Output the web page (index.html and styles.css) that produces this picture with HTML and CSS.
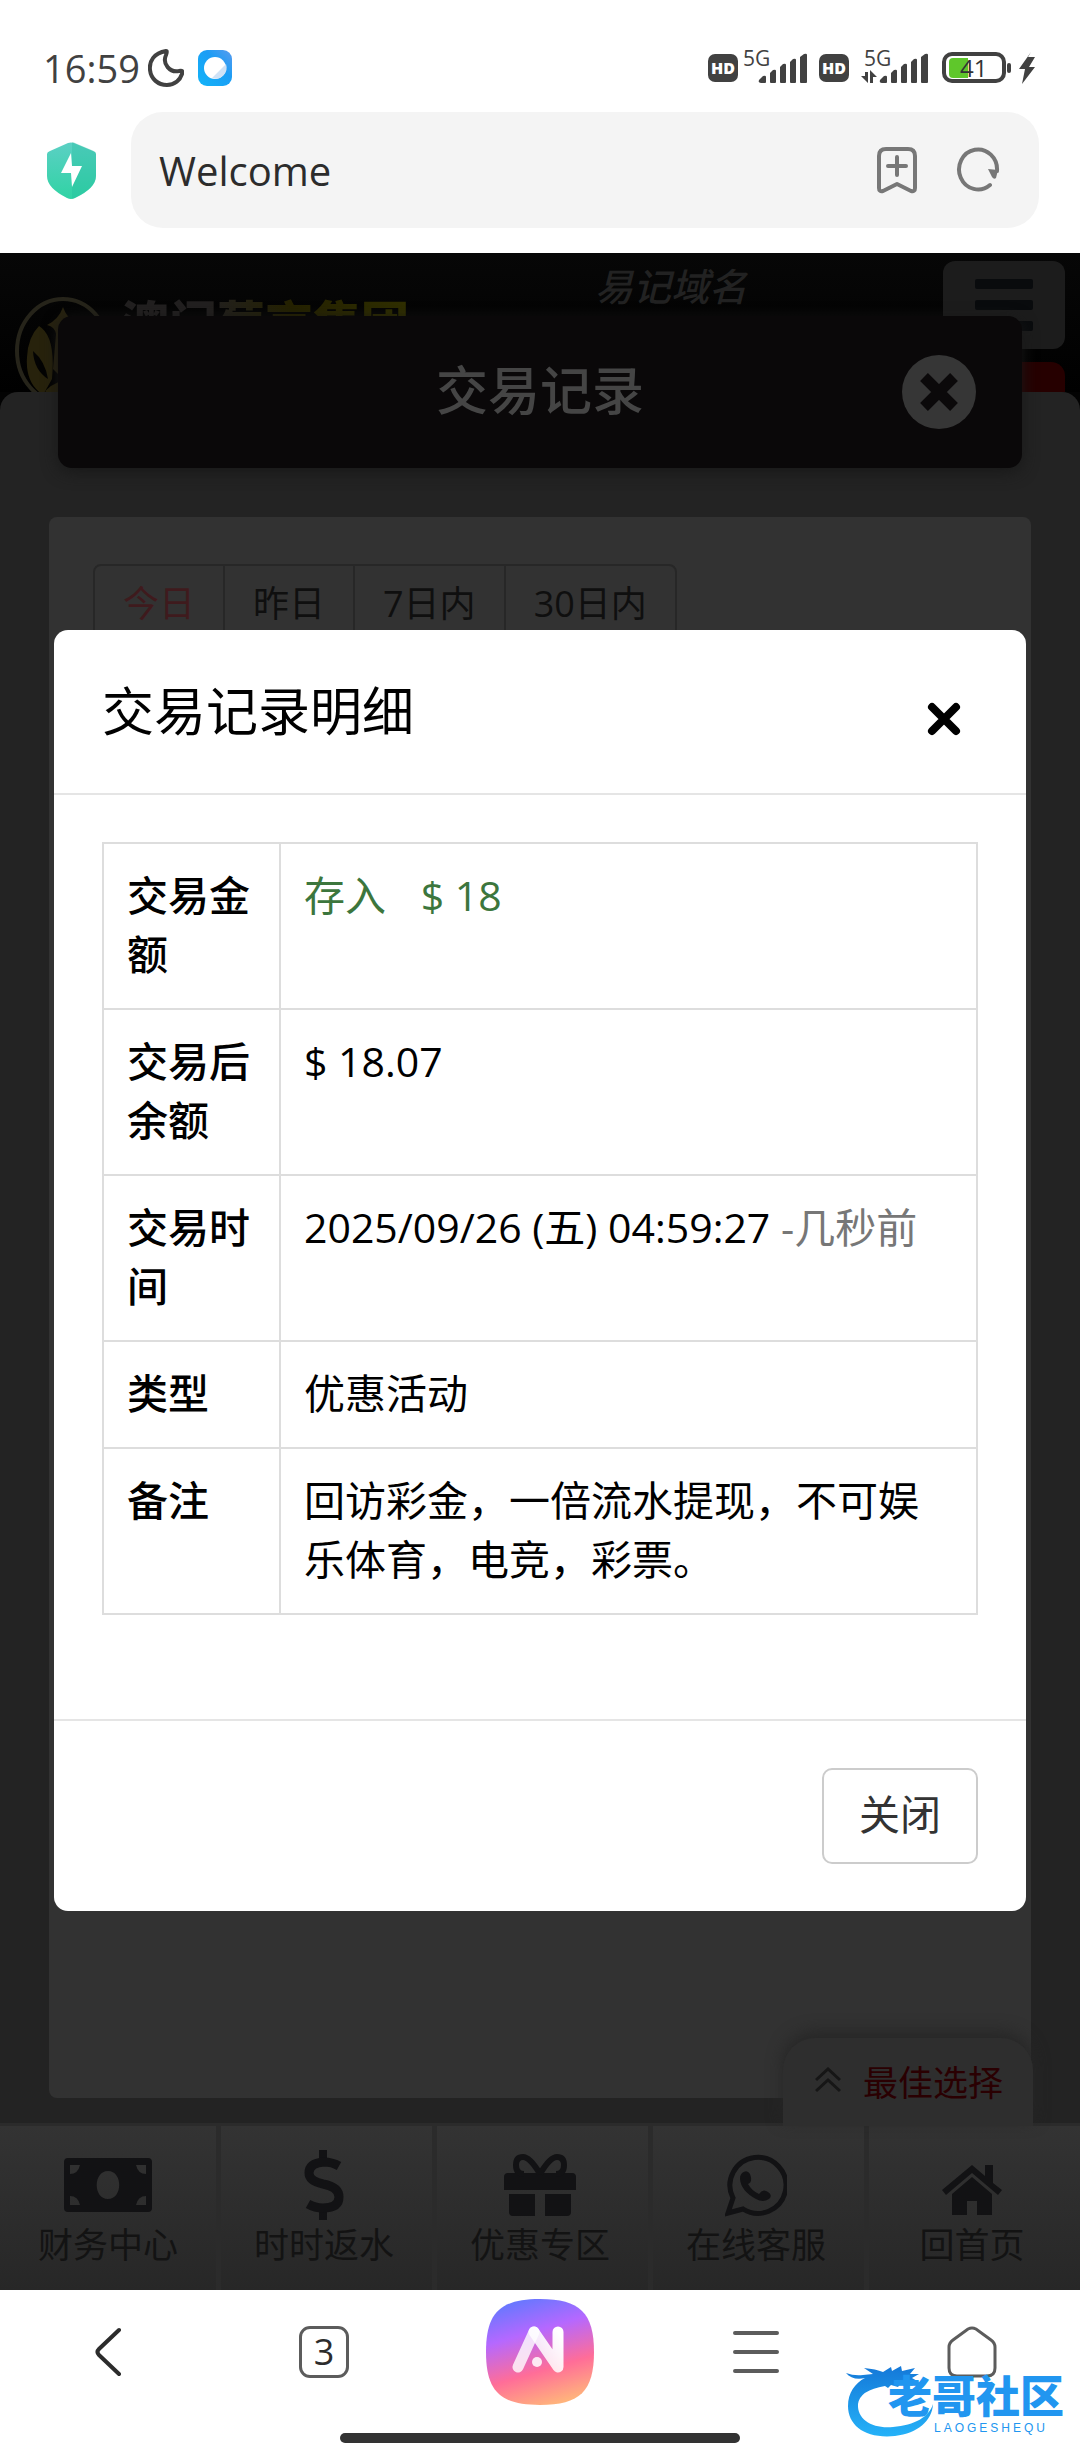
FILE: index.html
```html
<!DOCTYPE html>
<html lang="zh-CN">
<head>
    <meta charset="UTF-8">
    <meta name="viewport" content="width=device-width, initial-scale=1.0">
    <title>Welcome</title>
    <link rel="stylesheet" href="styles.css">
</head>
<body>
    <div class="status-bar">
        <span class="clock">16:59</span>
        <svg class="moon" width="36" height="38" viewBox="0 0 36 38"><path d="M18 2C6 4 1 12 2 21c1 9 8 15 17 15 8 0 13-5 15-11 1-3 0-4-3-3-9 2-17-7-13-16 1-3 1-4 0-4z" fill="none" stroke="#414141" stroke-width="4" stroke-linejoin="round"/></svg>
        <svg class="app-dot" width="34" height="36" viewBox="0 0 34 36">
            <defs><linearGradient id="dot" x1="0" y1="1" x2="1" y2="0"><stop offset="0" stop-color="#12b4f8"/><stop offset=".6" stop-color="#1b9df5"/><stop offset="1" stop-color="#5a9bee"/></linearGradient></defs>
            <rect width="34" height="36" rx="9" fill="url(#dot)"/>
            <circle cx="17" cy="18" r="11" fill="#fff"/>
            <path d="M28 14a11 11 0 0 1-14 14z" fill="#cfe2f6"/>
        </svg>
        <svg class="status-icons" width="330" height="58" viewBox="0 -10 330 58">
            <g fill="#414141">
                <rect x="2" y="5" width="30" height="28" rx="7"/>
                <rect x="113" y="5" width="30" height="28" rx="7"/>
                <g id="bars">
                    <path d="M53 31l4-4q3-1 3 1v5q0 1-1 1h-4q-3 0-2-3z"/>
                    <path d="M64 24l3-3q3-1 3 1v11q0 1-1 1h-4q-1 0-1-1z"/>
                    <path d="M74 18l3-3q3-1 3 1v17q0 1-1 1h-4q-1 0-1-1z"/>
                    <path d="M84 13l3-3q3-1 3 1v22q0 1-1 1h-4q-1 0-1-1z"/>
                    <path d="M94 8l4-3q3-1 3 1v27q0 1-1 1h-5q-1 0-1-1z"/>
                </g>
                <use href="#bars" x="121"/>
                <path d="M159 23h3v11l-7-7h4zM164 34h3v-6h4l-7-7z"/>
                <rect x="301" y="14" width="4" height="10" rx="2"/>
                <path d="M325 3l-12 17h6l-3 15 13-17h-6l6-10h-7z"/>
            </g>
            <rect x="238" y="5" width="60" height="27" rx="8" fill="none" stroke="#414141" stroke-width="4"/>
            <path d="M247 9h15v20h-15q-4 0-4-4v-12q0-4 4-4z" fill="#5fc72b"/>
            <g class="hd-label"><text x="5" y="25">HD</text><text x="116" y="25">HD</text></g>
            <g class="net-label"><text x="37" y="17">5G</text><text x="158" y="17">5G</text></g>
            <text class="battery-label" x="254" y="28">41</text>
        </svg>
    </div>

    <div class="address-row">
        <svg class="shield" width="49" height="57" viewBox="0 0 49 57">
            <defs><linearGradient id="sh" x1="0" y1="0" x2="0" y2="1"><stop offset="0" stop-color="#5bd0c4"/><stop offset="1" stop-color="#30d3a4"/></linearGradient></defs>
            <path d="M21 1q3-1 6 0l19 8q3 1 3 3v22q0 12-21 22-4 2-8 0Q0 46 0 34V12q0-2 3-3z" fill="url(#sh)"/>
            <path d="M25 0q2 0 3 1l19 8q2 1 2 3v22q0 12-21 22l-3 1z" fill="#22b99d" opacity=".3"/>
            <path d="M24 11L14 31h10l1 14 10-21H25z" fill="#fff"/>
        </svg>
        <div class="address-bar">
            <span class="page-name">Welcome</span>
            <button class="icon-button" aria-label="添加书签">
                <svg width="42" height="48" viewBox="0 0 42 48"><path d="M10 3h22q7 0 7 7v32q0 4-4 3l-14-7-14 7q-4 1-4-3V10q0-7 7-7zM21 11v18M12 20h18" fill="none" stroke="#777" stroke-width="4" stroke-linecap="round" stroke-linejoin="round"/></svg>
            </button>
            <button class="icon-button" aria-label="刷新">
                <svg width="44" height="46" viewBox="0 0 44 46"><path d="M34 38A19 20 0 1 1 41 24" fill="none" stroke="#777" stroke-width="4" stroke-linecap="round"/><path d="M32 22l10 1-2 8q-2 2-4-1z" fill="#777"/></svg>
            </button>
        </div>
    </div>

    <div class="site">
        <div class="site-header">
            <svg class="logo-mark" width="96" height="108" viewBox="0 0 96 108">
                <ellipse cx="48" cy="54" rx="46" ry="52" fill="none" stroke="#26241a" stroke-width="4"/>
                <path d="M48 10q4 12 16 18-10 3-12 10v30l-6 12-8-8 3-35q-1-7-9-9 12-6 16-18z" fill="#27220f"/>
                <path d="M24 29q17 10 13 53L28 98Q10 86 12 60q1-20 12-31z" fill="#27220c"/>
                <path d="M18 54q12 10 15 28-14-9-15-28z" fill="#030303"/>
                <path d="M30 94q12-12 30-12l24 4-24 16q-20 2-30-8z" fill="#27220c"/>
            </svg>
            <span class="brand">澳门葡京集团</span>
            <span class="domain">易记域名</span>
            <div class="header-side">
                <button class="menu-button" aria-label="菜单"><span></span><span></span><span></span></button>
                <div class="red-tab"></div>
            </div>
        </div>

        <div class="panel">
            <div class="card">
                <div class="range">
                    <button class="active">今日</button>
                    <button>昨日</button>
                    <button>7日内</button>
                    <button>30日内</button>
                </div>
            </div>
        </div>

        <div class="page-title">
            <h1>交易记录</h1>
            <button class="round-close" aria-label="关闭页面">
                <svg width="40" height="40" viewBox="0 0 40 40"><path d="M5 5l30 30M35 5L5 35" stroke="#0b090a" stroke-width="11"/></svg>
            </button>
        </div>

        <div class="site-nav">
            <button class="best-pick">
                <svg width="26" height="26" viewBox="0 0 26 26"><path d="M1 13L13 2l12 11M1 24l12-11 12 11" fill="none" stroke="#161616" stroke-width="3"/></svg>
                最佳选择
            </button>
            <a href="#">
                <svg width="88" height="54" viewBox="0 0 88 54"><path fill-rule="evenodd" d="M4 0h80q4 0 4 4v46q0 4-4 4H4q-4 0-4-4V4q0-4 4-4zM6 7v9q8 0 10-9zM82 7v9q-8 0-10-9zM6 47v-9q8 0 10 9zM82 47v-9q-8 0-10 9zM44 13c-15 0-15 28 0 28s15-28 0-28z"/></svg>
                <span>财务中心</span>
            </a>
            <a href="#">
                <svg width="42" height="70" viewBox="0 0 42 70"><path d="M16 0h8v9h-8zM16 60h8v10h-8z"/><path d="M36 16Q29 12 21 12 6 13 6 23q0 8 14 11 16 3 16 13 0 11-16 11-8 0-15-4" fill="none" stroke="#121214" stroke-width="9"/></svg>
                <span>时时返水</span>
            </a>
            <a href="#">
                <svg width="72" height="62" viewBox="0 0 72 62"><path d="M4 19h64q4 0 4 4v13H0V23q0-4 4-4zM5 40h26v22H9q-4 0-4-4zM41 40h26v18q0 4-4 4H41z"/><path d="M36 20Q26 3 19 3q-7 0-7 8 0 9 8 9M36 20Q46 3 53 3q7 0 7 8 0 9-8 9" fill="none" stroke="#121214" stroke-width="6"/></svg>
                <span>优惠专区</span>
            </a>
            <a href="#">
                <svg width="62" height="62" viewBox="0 0 62 62"><path d="M3 59l5-15A28 28 0 1 1 18 55z" fill="none" stroke="#121214" stroke-width="5"/><path d="M17 19q5-4 8 1 3 8-2 10 4 7 11 10 4-6 9-2 5 3 1 7-6 4-13 0-15-8-16-20 0-4 2-6z"/></svg>
                <span>在线客服</span>
            </a>
            <a href="#">
                <svg class="house" width="60" height="50" viewBox="0 0 60 50"><path d="M30 0l13 11V0h8v18l9 7-4 5L30 8 4 30l-4-5z"/><path d="M30 12l20 17v21H35V36H25v14H10V29z"/></svg>
                <span>回首页</span>
            </a>
        </div>

        <div class="modal" role="dialog" aria-labelledby="modal-title">
            <div class="modal-header">
                <h2 id="modal-title">交易记录明细</h2>
                <button class="modal-x" aria-label="关闭窗口">
                    <svg width="34" height="34" viewBox="0 0 34 34"><path d="M5 5l24 24M29 5L5 29" stroke="#000" stroke-width="8" stroke-linecap="round"/></svg>
                </button>
            </div>
            <div class="modal-body">
                <table>
                    <tr><th>交易金额</th><td class="amount">存入 <span>$ 18</span></td></tr>
                    <tr><th>交易后余额</th><td>$ 18.07</td></tr>
                    <tr><th>交易时间</th><td>2025/09/26 (五) 04:59:27 <span class="ago">-几秒前</span></td></tr>
                    <tr><th>类型</th><td>优惠活动</td></tr>
                    <tr><th>备注</th><td>回访彩金，一倍流水提现，不可娱乐体育，电竞，彩票。</td></tr>
                </table>
            </div>
            <div class="modal-footer">
                <button class="close-button">关闭</button>
            </div>
        </div>
    </div>

    <div class="browser-nav">
        <div class="browser-buttons">
            <button aria-label="后退"><svg width="28" height="50" viewBox="0 0 28 50"><path d="M25 3L5 22q-3 3 0 6l20 19" fill="none" stroke="#2c2c2c" stroke-width="4" stroke-linecap="round"/></svg></button>
            <button aria-label="标签页"><span class="tab-count">3</span></button>
            <button aria-label="AI">
                <svg width="108" height="106" viewBox="0 0 108 106">
                    <defs>
                        <linearGradient id="ai" x1=".3" y1="0" x2=".6" y2="1"><stop offset="0" stop-color="#6478ff"/><stop offset=".32" stop-color="#b568ff"/><stop offset=".68" stop-color="#ff6d98"/><stop offset="1" stop-color="#ffb37c"/></linearGradient>
                        <linearGradient id="stroke" x1="0" y1="1" x2="1" y2="0"><stop offset="0" stop-color="#fff" stop-opacity=".75"/><stop offset="1" stop-color="#fff"/></linearGradient>
                    </defs>
                    <path d="M54 0c40 0 54 14 54 53s-14 53-54 53S0 92 0 53 14 0 54 0z" fill="url(#ai)"/>
                    <path d="M32 68l16-35" stroke="#fff" stroke-opacity=".8" stroke-width="11" stroke-linecap="round"/>
                    <path d="M48 33l24 35V33" fill="none" stroke="url(#stroke)" stroke-width="11" stroke-linecap="round" stroke-linejoin="round"/>
                    <circle cx="51" cy="63" r="5" fill="#fff" opacity=".85"/>
                </svg>
            </button>
            <button aria-label="菜单"><svg width="46" height="44" viewBox="0 0 46 44"><path d="M2 3h42M2 22h42M2 41h42" stroke="#5c5c5c" stroke-width="4" stroke-linecap="round"/></svg></button>
            <button aria-label="主页"><svg width="50" height="52" viewBox="0 0 50 52"><path d="M21 3q4-2 8 0l15 11q4 3 4 7v21q0 8-8 8H10q-8 0-8-8V21q0-4 4-7z" fill="none" stroke="#5c5c5c" stroke-width="3"/></svg></button>
        </div>
        <div class="home-indicator"></div>
        <div class="watermark">
            <svg width="92" height="76" viewBox="0 0 92 76">
                <defs><linearGradient id="wm" x1="0" y1="0" x2="0" y2="1"><stop offset="0" stop-color="#1478d8"/><stop offset="1" stop-color="#25b2f8"/></linearGradient></defs>
                <path d="M0 10q8 3 17 2l10-1-9-6q12 1 19 4l8-5 1 4 9-5 1 5 13-3-5 6h9l-7 4 7 4-10-1 4 5-12-3-3 4-7-2-3 3-3-2Q14 27 12 41c-1 16 15 25 35 23 22-2 36-10 40-23-1 17-15 29-38 32C20 76 2 63 2 43 2 30 9 20 19 15 11 17 4 15 0 10z" fill="url(#wm)"/>
            </svg>
            <div class="watermark-text">
                <strong>老哥社区</strong>
                <small>LAOGESHEQU</small>
            </div>
        </div>
    </div>
</body>
</html>
```
FILE: styles.css
```css
* {
    box-sizing: border-box;
}
body {
    display: flex;
    flex-direction: column;
    min-height: 100vh;
    margin: 0;
    background-color: #fff;
    font-family: "Open Sans", "Noto Sans CJK SC", sans-serif;
    color: #000;
}
button {
    padding: 0;
    border: none;
    background: none;
    font-family: inherit;
    color: inherit;
    cursor: pointer;
}
svg {
    display: block;
    flex: none;
}

/* phone status bar */
.status-bar {
    display: flex;
    align-items: center;
    height: 112px;
    padding: 24px 44px 0 43px;
}
.clock {
    font-size: 38px;
    font-weight: 500;
    color: #414141;
}
.moon {
    margin-left: 8px;
}
.app-dot {
    margin-left: 14px;
}
.status-icons {
    margin-left: auto;
}
.hd-label {
    font-size: 16px;
    font-weight: 800;
    fill: #fff;
}
.net-label {
    font-size: 21px;
    font-weight: 500;
    fill: #414141;
}
.battery-label {
    font-size: 24px;
    fill: #333;
}

/* address bar */
.address-row {
    display: flex;
    align-items: center;
    padding: 0 41px 25px 47px;
}
.address-bar {
    display: flex;
    flex: 1;
    align-items: center;
    height: 116px;
    margin-left: 35px;
    padding: 0 39px 0 28px;
    border-radius: 32px;
    background-color: #f4f4f4;
}
.page-name {
    flex: 1;
    font-size: 40px;
    font-weight: 500;
    color: #2c2c2c;
}
.icon-button {
    margin-left: 38px;
}

/* dimmed site behind the dialog */
.site {
    display: flex;
    flex: 1;
    flex-direction: column;
    position: relative;
    background-color: #030303;
}
.site-header {
    display: flex;
    align-items: flex-start;
    height: 139px;
    padding: 8px 15px 0;
    overflow: hidden;
    background-image: linear-gradient(#070707, #000);
}
.logo-mark {
    margin-top: 36px;
}
.brand {
    margin: 38px 0 0 10px;
    font-size: 48px;
    font-weight: 900;
    line-height: 48px;
    color: transparent;
    background-image: linear-gradient(90deg, #222020 30%, #252200 60%, #302f00);
    background-clip: text;
}
.domain {
    margin-left: 186px;
    font-size: 38px;
    font-style: italic;
    font-weight: 500;
    line-height: 50px;
    color: #222;
}
.header-side {
    margin-left: auto;
    width: 122px;
}
.menu-button {
    display: flex;
    flex-direction: column;
    gap: 11px;
    width: 122px;
    height: 88px;
    padding: 18px 32px;
    border-radius: 12px;
    background-color: #1c1c1c;
}
.menu-button span {
    width: 58px;
    height: 10px;
    border-radius: 2px;
    background-color: #090b0d;
}
.red-tab {
    height: 40px;
    margin-top: 13px;
    border-radius: 14px 14px 0 0;
    background-color: #260000;
}
.panel {
    display: flex;
    flex: 1;
    padding: 125px 49px 25px;
    border-radius: 18px 18px 0 0;
    background-color: #232323;
}
.card {
    flex: 1;
    padding: 47px 44px;
    border-radius: 8px;
    background-color: #323232;
}
.range {
    display: inline-flex;
    border: 2px solid #272727;
    border-radius: 8px;
}
.range button {
    padding: 0 28px;
    font-size: 36px;
    line-height: 76px;
    color: #0f0f0f;
}
.range button + button {
    border-left: 2px solid #272727;
}
.range .active {
    color: #3f1a1d;
}
.page-title {
    display: flex;
    align-items: center;
    justify-content: center;
    position: absolute;
    top: 63px;
    left: 58px;
    right: 58px;
    height: 152px;
    border-radius: 14px;
    background-color: #0a0809;
    box-shadow: 0 4px 16px #181818;
}
.page-title h1 {
    margin: 0;
    padding-bottom: 4px;
    font-size: 52px;
    font-weight: 500;
    line-height: 74px;
    color: #454545;
}
.round-close {
    display: flex;
    align-items: center;
    justify-content: center;
    position: absolute;
    right: 46px;
    width: 74px;
    height: 74px;
    border-radius: 50%;
    background-color: #363636;
}
.site-nav {
    display: flex;
    position: relative;
    height: 167px;
    border-top: 3px solid #2b2b2b;
    background-image: linear-gradient(#333, #272727);
}
.site-nav a {
    display: flex;
    flex: 1;
    flex-direction: column;
    align-items: center;
    padding-top: 22px;
    font-size: 35px;
    line-height: 46px;
    text-decoration: none;
    color: #131313;
    fill: #121214;
}
.site-nav a + a {
    box-shadow: inset 5px 0 #2b2b2b;
}
.site-nav a svg {
    height: 74px;
}
.site-nav .house {
    padding-top: 10px;
}
.best-pick {
    display: flex;
    align-items: center;
    gap: 22px;
    position: absolute;
    right: 47px;
    bottom: 100%;
    height: 88px;
    padding: 0 30px 4px 32px;
    border-radius: 32px 32px 0 0;
    background-color: #2e2e2e;
    box-shadow: 0 -6px 16px #262626;
    font-size: 35px;
    color: #2a0002;
}

/* dialog */
.modal {
    position: absolute;
    top: 377px;
    left: 5%;
    right: 5%;
    border-radius: 14px;
    background-color: #fff;
    font-size: 41px;
    line-height: 59px;
}
.modal-header {
    display: flex;
    align-items: center;
    justify-content: space-between;
    padding: 46px 65px 47px 48px;
    border-bottom: 2px solid #e5e5e5;
}
.modal-header h2 {
    margin: 0;
    font-size: 52px;
    font-weight: 400;
    line-height: 70px;
}
.modal-x {
    padding-top: 16px;
}
.modal-body {
    padding: 47px 48px 104px;
}
table {
    width: 100%;
    border-collapse: collapse;
    table-layout: fixed;
}
th, td {
    padding: 22px 23px 24px;
    border: 2px solid #ddd;
    text-align: left;
    vertical-align: top;
}
th {
    width: 177px;
    font-weight: 500;
}
.amount {
    color: #3c763d;
}
.amount span {
    margin-left: 24px;
}
.ago {
    color: #777;
}
.modal-footer {
    display: flex;
    justify-content: flex-end;
    padding: 47px 48px;
    border-top: 2px solid #e5e5e5;
}
.close-button {
    padding: 15px 35px 19px;
    border: 2px solid #ccc;
    border-radius: 10px;
    font-size: 41px;
    line-height: 58px;
    color: #333;
}

/* browser toolbar */
.browser-nav {
    position: relative;
    padding: 9px 0 17px;
}
.browser-buttons {
    display: flex;
    height: 106px;
}
.browser-buttons button {
    display: flex;
    flex: 1;
    align-items: center;
    justify-content: center;
}
.tab-count {
    width: 50px;
    height: 52px;
    border: 3px solid #5c5c5c;
    border-radius: 11px;
    font-size: 36px;
    line-height: 46px;
    color: #2c2c2c;
}
.home-indicator {
    width: 37%;
    height: 10px;
    margin: 28px auto 0;
    border-radius: 5px;
    background-color: #333;
}
.watermark {
    display: flex;
    position: absolute;
    top: 73px;
    right: 16px;
}
.watermark-text {
    display: flex;
    flex-direction: column;
    gap: 4px;
    margin: 11px 0 0 -50px;
    color: #2196f0;
}
.watermark strong {
    font-size: 44px;
    font-weight: 900;
    line-height: 44px;
}
.watermark small {
    padding-left: 46px;
    font-family: "Liberation Sans", sans-serif;
    font-size: 12px;
    letter-spacing: 3px;
    line-height: 12px;
}
```
